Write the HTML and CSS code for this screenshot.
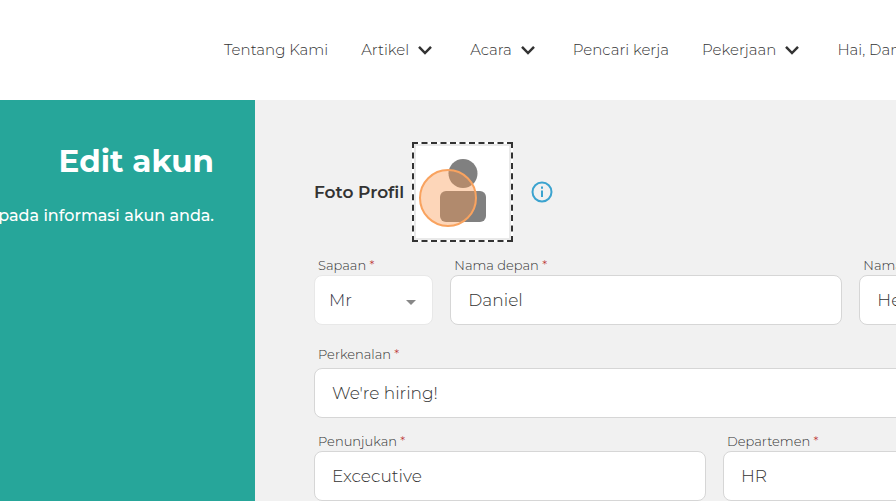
FILE: index.html
```html
<!DOCTYPE html>
<html lang="id">
	<head>
		<meta charset="utf-8" />
		<meta name="viewport" content="width=device-width, initial-scale=1" />
		<title>Edit akun</title>
		<link rel="stylesheet" href="styles.css">
	</head>
	<body>
		<header class="header">
			<nav class="nav">
				<a class="nav-link" href="#">Tentang Kami</a>
				<button class="nav-link nav-toggle" type="button">Artikel
					<svg class="chevron" viewBox="0 0 14 10"><path d="M1 1.800 7 8l6-6.200" /></svg>
				</button>
				<button class="nav-link nav-toggle" type="button">Acara
					<svg class="chevron" viewBox="0 0 14 10"><path d="M1 1.800 7 8l6-6.200" /></svg>
				</button>
				<a class="nav-link" href="#">Pencari kerja</a>
				<button class="nav-link nav-toggle" type="button">Pekerjaan
					<svg class="chevron" viewBox="0 0 14 10"><path d="M1 1.800 7 8l6-6.200" /></svg>
				</button>
				<a class="nav-link" href="#">Hai, Daniel</a>
			</nav>
		</header>

		<main class="main">
			<section class="side">
				<h1 class="side-title">Edit akun</h1>
				<p class="side-text">pada informasi akun anda.</p>
			</section>

			<form class="form">
				<div class="photo">
					<span class="photo-label">Foto Profil</span>
					<button class="photo-drop" type="button" aria-label="Foto Profil">
						<svg class="avatar" viewBox="0 0 46 63">
							<circle cx="23" cy="14.500" r="14.500" />
							<rect y="32" width="46" height="31" rx="6" />
						</svg>
						<span class="pointer"></span>
					</button>
					<button class="info" type="button" aria-label="Info">
						<svg viewBox="0 0 22 22">
							<circle cx="11" cy="11" r="9.500" />
							<path d="M11 9.500v6.500M11 5.500v2.200" />
						</svg>
					</button>
				</div>

				<div class="row">
					<div class="field col-2">
						<label for="title">Sapaan <span class="req">*</span></label>
						<div class="select">
							<select id="title">
								<option>Mr</option>
							</select>
						</div>
					</div>
					<div class="field col-6">
						<label for="first">Nama depan <span class="req">*</span></label>
						<input id="first" type="text" value="Daniel" />
					</div>
					<div class="field col-4">
						<label for="last">Nama belakang <span class="req">*</span></label>
						<input id="last" type="text" value="Henry" />
					</div>
				</div>

				<div class="row row-intro">
					<div class="field col-12">
						<label for="intro">Perkenalan <span class="req">*</span></label>
						<input id="intro" type="text" value="We're hiring!" />
					</div>
				</div>

				<div class="row">
					<div class="field col-6">
						<label for="job">Penunjukan <span class="req">*</span></label>
						<input id="job" type="text" value="Excecutive" />
					</div>
					<div class="field col-6">
						<label for="dept">Departemen <span class="req">*</span></label>
						<input id="dept" type="text" value="HR" />
					</div>
				</div>
			</form>
		</main>
	</body>
</html>
```

FILE: styles.css
```css
* {
	box-sizing: border-box;
}
body {
	margin: 0;
	min-height: 100vh;
	display: flex;
	flex-direction: column;
	overflow: hidden;
	background: #fff;
	color: #333;
	font-family: Montserrat, Inter, sans-serif;
	font-weight: 300;
}
button, input, select {
	font: inherit;
	color: inherit;
}
button {
	padding: 0;
	border: 0;
	background: none;
	cursor: pointer;
}

/* header */
.header {
	height: 100px;
	display: flex;
	align-items: center;
	padding-left: 224px;
}
.nav {
	display: flex;
	gap: 33px;
}
.nav-link {
	flex: none;
	color: #333;
	font-size: 15px;
	line-height: 20px;
	text-decoration: none;
	white-space: nowrap;
}
.nav-toggle {
	display: flex;
	align-items: center;
	gap: 9px;
	padding-right: 5px;
}
.chevron {
	width: 14px;
	height: 10px;
	fill: none;
	stroke: #333;
	stroke-width: 2.5;
}

/* left panel */
.main {
	flex: 1;
	display: flex;
	background: #f1f1f1;
}
.side {
	flex: none;
	width: 255px;
	padding: 41px 41px 0 0;
	background: #26a69a;
	color: #fff;
	display: flex;
	flex-direction: column;
	align-items: flex-end;
	white-space: nowrap;
}
.side-title {
	margin: 0;
	font-size: 31px;
	line-height: 40px;
	font-weight: 700;
}
.side-text {
	margin: 23px 0 0;
	font-size: 16px;
	line-height: 24px;
	font-weight: 500;
}

/* form */
.form {
	flex: 1 0 860px;
	min-width: 0;
	padding: 42px 0 0 59px;
}
.photo {
	display: flex;
	align-items: center;
}
.photo-label {
	margin-right: 8px;
	font-size: 17px;
	font-weight: 600;
	color: #333;
}
.photo-drop {
	position: relative;
	width: 101px;
	height: 100px;
	padding-bottom: 4px;
	display: flex;
	align-items: center;
	justify-content: center;
	border: 2px dashed #333;
	background: #fff;
	box-shadow: inset 0 0 0 2px #e9e9e9;
}
.avatar {
	width: 46px;
	height: 63px;
	fill: #808080;
}
.pointer {
	position: absolute;
	left: 5px;
	top: 25px;
	width: 58px;
	height: 58px;
	border: 2px solid #f9a35f;
	border-radius: 50%;
	background: rgba(250, 153, 80, .4);
}
.info {
	width: 22px;
	height: 22px;
	margin-left: 18px;
}
.info svg {
	display: block;
	fill: none;
	stroke: #3ba3cf;
	stroke-width: 2;
}
.row {
	display: grid;
	grid-template-columns: repeat(12, minmax(0, 1fr));
	gap: 17px;
	margin-top: 13px;
}
.row-intro {
	margin-top: 19px;
}
.row-intro label {
	margin-bottom: 4px;
}
.col-2 {
	grid-column: span 2;
}
.col-4 {
	grid-column: span 4;
}
.col-6 {
	grid-column: span 6;
}
.col-12 {
	grid-column: span 12;
}
.field label {
	display: block;
	padding-left: 4px;
	font-size: 13px;
	line-height: 20px;
	color: #333;
	white-space: nowrap;
}
.req {
	color: #b33;
}
.field input,
.field select {
	display: block;
	width: 100%;
	height: 50px;
	padding: 0 17px;
	border: 1px solid #d6d6d6;
	border-radius: 8px;
	background: #fff;
	font-size: 17px;
}
.select {
	position: relative;
}
.field select {
	appearance: none;
	padding: 0 14px;
	border-color: #e8e8e8;
	color: #334;
}
.select::after {
	content: "";
	position: absolute;
	right: 17px;
	top: 25px;
	border: 5px solid transparent;
	border-top-color: #888;
	border-bottom: 0;
	pointer-events: none;
}
```
